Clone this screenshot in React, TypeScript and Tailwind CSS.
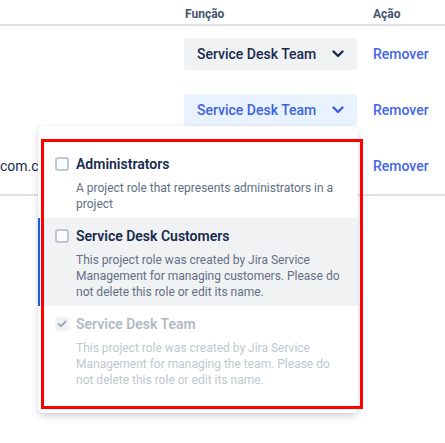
import React from "react";

const Chevron = ({ color }: { color: string }) => (
  <svg width="12" height="8" viewBox="0 0 12 8" fill="none">
    <path d="M1.5 1.5 L6 6 L10.5 1.5" stroke={color} strokeWidth="2.4" strokeLinecap="round" strokeLinejoin="round" />
  </svg>
);

const Box = () => (
  <span className="w-[14px] h-[14px] shrink-0 rounded-[3px] border-2 border-[#c1c7d0] bg-[#fafbfc]" />
);

const CheckedDisabled = () => (
  <span className="w-[14px] h-[14px] shrink-0 rounded-[3px] bg-[#f1f2f4] flex items-center justify-center">
    <svg width="10" height="8" viewBox="0 0 10 8" fill="none">
      <path d="M1.5 4 L4 6.3 L8.5 1.5" stroke="#a5adba" strokeWidth="2" strokeLinecap="round" strokeLinejoin="round" />
    </svg>
  </span>
);

export default function App() {
  const font = { fontFamily: "Roboto, 'Noto Sans', sans-serif" };
  return (
    <div className="relative w-[445px] h-[443px] bg-white overflow-hidden text-[#172b4d]" style={font}>
      {/* header */}
      <div className="flex h-[26px] border-b-2 border-[#dfe1e6] text-[12px] font-bold text-[#44546f]">
        <div className="w-[185px]" />
        <div className="w-[188px] pt-[5px]">Função</div>
        <div className="flex-1 pt-[5px]">Ação</div>
      </div>
      {/* rows */}
      <div className="border-b-2 border-[#dfe1e6]">
        <div className="flex h-[56px] items-center">
          <div className="w-[184px]" />
          <div className="w-[189px]">
            <div className="w-[173px] h-[32px] rounded-[3px] bg-[#f1f2f4] flex items-center justify-between pl-[13px] pr-[13px] text-[14px] font-medium text-[#172b4d]">
              <span>Service Desk Team</span>
              <Chevron color="#172b4d" />
            </div>
          </div>
          <div className="flex-1 text-[14px] font-medium text-[#4466e6]">Remover</div>
        </div>
        <div className="flex h-[56px] items-center">
          <div className="w-[184px]" />
          <div className="w-[189px]">
            <div className="w-[173px] h-[32px] rounded-[3px] bg-[#e9f2ff] flex items-center justify-between pl-[13px] pr-[13px] text-[14px] font-medium text-[#3d63dd]">
              <span>Service Desk Team</span>
              <Chevron color="#3d63dd" />
            </div>
          </div>
          <div className="flex-1 text-[14px] font-medium text-[#4466e6]">Remover</div>
        </div>
        <div className="flex h-[56px] items-center">
          <div className="w-[184px] text-[14px] whitespace-nowrap overflow-hidden">com.com.br</div>
          <div className="w-[189px]" />
          <div className="flex-1 text-[14px] font-medium text-[#4466e6]">Remover</div>
        </div>
      </div>

      {/* dropdown menu */}
      <div className="absolute left-[38px] top-[126px] w-[320px] h-[287px] bg-white rounded-[4px] shadow-[0_4px_8px_-2px_rgba(9,30,66,0.25),0_0_1px_rgba(9,30,66,0.31)] pt-[20px]">
        <div className="border-l-2 border-transparent pl-[15px] pr-[16px] pt-[8px] pb-[6px]">
          <div className="flex items-center gap-[7px] h-[20px]">
            <Box />
            <span className="text-[14px] font-semibold text-[#172b4d]">Administrators</span>
          </div>
          <div className="pl-[21px] mt-[6px] text-[12px] leading-[16px] text-[#626f86]">
            A project role that represents administrators in a project
          </div>
        </div>
        <div className="border-l-2 border-[#0c66e4] bg-[#f1f2f4] pl-[15px] pr-[16px] pt-[8px] pb-[6px]">
          <div className="flex items-center gap-[7px] h-[20px]">
            <Box />
            <span className="text-[14px] font-semibold text-[#172b4d]">Service Desk Customers</span>
          </div>
          <div className="pl-[21px] mt-[6px] text-[12px] leading-[16px] text-[#626f86]">
            This project role was created by Jira Service Management for managing customers. Please do not delete this role or edit its name.
          </div>
        </div>
        <div className="border-l-2 border-transparent pl-[15px] pr-[16px] pt-[8px] pb-[6px]">
          <div className="flex items-center gap-[7px] h-[20px]">
            <CheckedDisabled />
            <span className="text-[14px] font-semibold text-[#b3b9c4]">Service Desk Team</span>
          </div>
          <div className="pl-[21px] mt-[6px] text-[12px] leading-[16px] text-[#c1c7d0]">
            This project role was created by Jira Service Management for managing the team. Please do not delete this role or edit its name.
          </div>
        </div>
      </div>

      {/* red annotation */}
      <div className="absolute left-[41px] top-[139px] w-[322px] h-[270px] border-[3px] border-[#ff0000] pointer-events-none" />
    </div>
  );
}
